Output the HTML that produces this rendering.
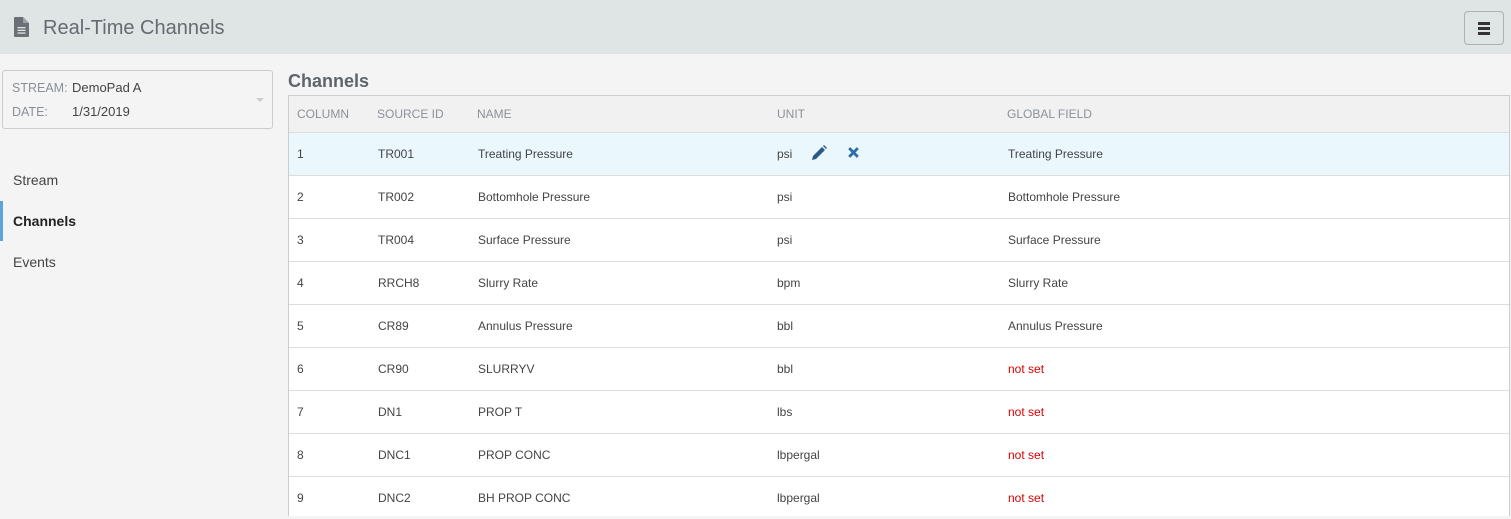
<!DOCTYPE html><html><head><style>
body{margin:0;width:1511px;height:516px;overflow:hidden;background:#f4f4f4;font-family:"Liberation Sans",sans-serif;position:relative}
.hdr{position:absolute;left:0;top:0;width:1511px;height:54px;background:#dfe4e4}
.hdr .t{position:absolute;left:43px;top:17px;font-size:20px;color:#646b72}
.menu{position:absolute;left:1464px;top:11px;width:40px;height:34px;border:1px solid #a9b2b2;border-radius:4px;box-sizing:border-box}
.menu i{position:absolute;left:13px;width:12px;height:2.5px;background:#333}
.box{position:absolute;left:2px;top:70px;width:271px;height:59px;border:1px solid #ccc;border-radius:3px;box-sizing:border-box;font-size:13px}
.lbl{position:absolute;left:9px;color:#8a9097;font-size:12.5px}
.val{position:absolute;left:69px;color:#444}
.nav{position:absolute;left:13px;font-size:14px;color:#444}
.tbl{position:absolute;left:288px;top:95px;width:1222px;height:421px;border:1px solid #ccc;border-bottom:none;background:#fff;box-sizing:border-box}
.row{position:absolute;left:0;width:1220px;height:43px;border-top:1px solid #ddd;font-size:12px;color:#444;box-sizing:border-box}
.row span{position:absolute;top:14px}
.th{background:#f1f1f1;color:#8b9299;border-top:none;height:36px}
.th span{top:11px}
.ns{color:#d00}
</style></head><body>
<div class="hdr">
<svg style="position:absolute;left:14px;top:17px" width="15" height="20" viewBox="0 0 15 20"><path d="M0 1Q0 0 1 0H9L15 6V19Q15 20 14 20H1Q0 20 0 19Z" fill="#6a7076"/><path d="M9 0V6H15" fill="#9aa0a5"/><rect x="3.5" y="10" width="8" height="1.3" fill="#dfe4e4"/><rect x="3.5" y="12.7" width="8" height="1.3" fill="#dfe4e4"/><rect x="3.5" y="15.4" width="8" height="1.3" fill="#dfe4e4"/></svg>
<div class="t">Real-Time Channels</div>
<div class="menu"><i style="top:10px"></i><i style="top:15px"></i><i style="top:20px"></i></div>
</div>
<div class="box">
<span class="lbl" style="top:10px">STREAM:</span><span class="val" style="top:9px">DemoPad A</span>
<span class="lbl" style="top:34px">DATE:</span><span class="val" style="top:33px">1/31/2019</span>
<div style="position:absolute;right:8px;top:27px;border:4px solid transparent;border-top:4px solid #ccc"></div>
</div>
<div class="nav" style="top:172px">Stream</div>
<div style="position:absolute;left:0;top:201px;width:3px;height:40px;background:#5aa3dc"></div>
<div class="nav" style="top:213px;font-weight:bold;color:#222">Channels</div>
<div class="nav" style="top:254px">Events</div>
<div style="position:absolute;left:288px;top:71px;font-size:18px;font-weight:bold;color:#5f656c">Channels</div>
<div class="tbl">
<div class="row th" style="top:0"><span style="left:8px">COLUMN</span><span style="left:88px">SOURCE ID</span><span style="left:188px">NAME</span><span style="left:488px">UNIT</span><span style="left:718px">GLOBAL FIELD</span></div>
<div class="row" style="top:36px;background:#eaf7fd"><span style="left:8px">1</span><span style="left:89px">TR001</span><span style="left:189px">Treating Pressure</span><span style="left:488px">psi</span>
<svg style="position:absolute;left:522px;top:12px" width="16" height="16" viewBox="0 0 16 16"><path d="M1 15L2 11L11 2L14 5L5 14Z" fill="#2a5a88"/><path d="M12 1L13 0L16 3L15 4Z" fill="#2a5a88"/></svg>
<svg style="position:absolute;left:558px;top:13px" width="13" height="13" viewBox="0 0 12 12"><path d="M2 2L10 10M10 2L2 10" stroke="#2d6ea8" stroke-width="2.6"/></svg>
<span style="left:719px">Treating Pressure</span></div>
<div class="row" style="top:79px"><span style="left:8px">2</span><span style="left:89px">TR002</span><span style="left:189px">Bottomhole Pressure</span><span style="left:488px">psi</span><span style="left:719px">Bottomhole Pressure</span></div>
<div class="row" style="top:122px"><span style="left:8px">3</span><span style="left:89px">TR004</span><span style="left:189px">Surface Pressure</span><span style="left:488px">psi</span><span style="left:719px">Surface Pressure</span></div>
<div class="row" style="top:165px"><span style="left:8px">4</span><span style="left:89px">RRCH8</span><span style="left:189px">Slurry Rate</span><span style="left:488px">bpm</span><span style="left:719px">Slurry Rate</span></div>
<div class="row" style="top:208px"><span style="left:8px">5</span><span style="left:89px">CR89</span><span style="left:189px">Annulus Pressure</span><span style="left:488px">bbl</span><span style="left:719px">Annulus Pressure</span></div>
<div class="row" style="top:251px"><span style="left:8px">6</span><span style="left:89px">CR90</span><span style="left:189px">SLURRYV</span><span style="left:488px">bbl</span><span class="ns" style="left:719px">not set</span></div>
<div class="row" style="top:294px"><span style="left:8px">7</span><span style="left:89px">DN1</span><span style="left:189px">PROP T</span><span style="left:488px">lbs</span><span class="ns" style="left:719px">not set</span></div>
<div class="row" style="top:337px"><span style="left:8px">8</span><span style="left:89px">DNC1</span><span style="left:189px">PROP CONC</span><span style="left:488px">lbpergal</span><span class="ns" style="left:719px">not set</span></div>
<div class="row" style="top:380px"><span style="left:8px">9</span><span style="left:89px">DNC2</span><span style="left:189px">BH PROP CONC</span><span style="left:488px">lbpergal</span><span class="ns" style="left:719px">not set</span></div>
</div>
</body></html>
